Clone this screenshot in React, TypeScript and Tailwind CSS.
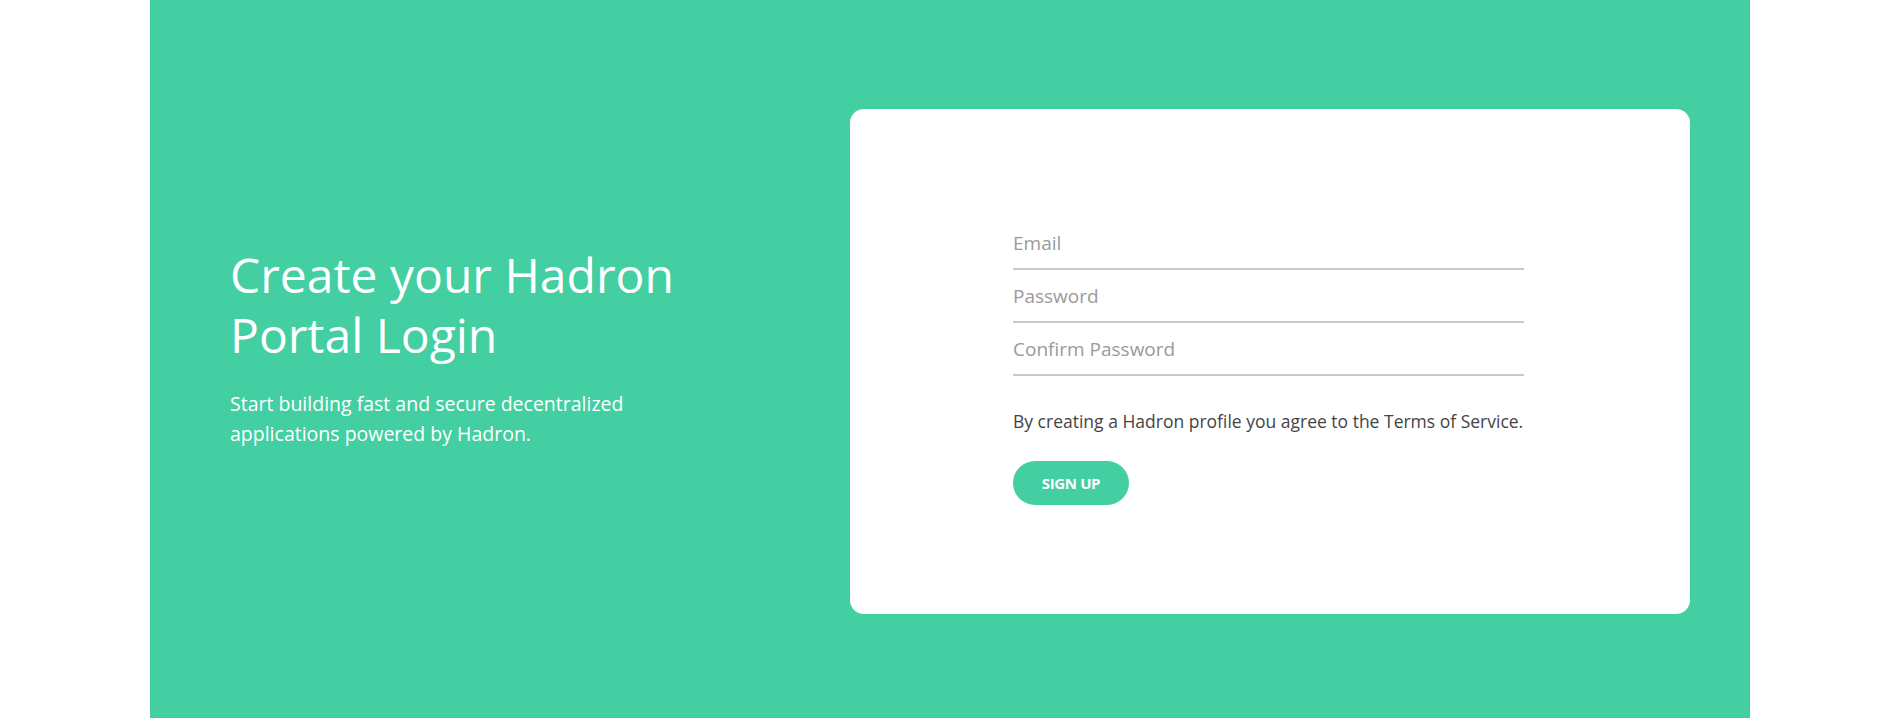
import React from "react";

export default function App() {
  return (
    <div className="min-h-[718px] w-full bg-white" style={{ fontFamily: '"Open Sans", "Noto Sans", sans-serif' }}>
      <div className="ml-[150px] w-[1600px] min-h-[718px] bg-[#43cfa1] flex">
        <div className="w-[700px] pl-[80px] pt-[245px]">
          <h1 className="text-white text-[48px] leading-[60px] font-normal">
            Create your Hadron
            <br />
            Portal Login
          </h1>
          <p className="mt-[24px] text-white text-[19.5px] leading-[30px]">
            Start building fast and secure decentralized
            <br />
            applications powered by Hadron.
          </p>
        </div>
        <div className="mt-[109px] w-[840px] h-[505px] bg-white rounded-[14px] pl-[163px] pt-[108px]">
          <div className="w-[511px] flex flex-col">
            <input
              placeholder="Email"
              className="h-[53px] w-full border-b-2 border-[#c9c9c9] outline-none text-[19px] text-[#555] placeholder:text-[#9a9a9a] bg-transparent"
            />
            <input
              type="password"
              placeholder="Password"
              className="h-[53px] w-full border-b-2 border-[#c9c9c9] outline-none text-[19px] text-[#555] placeholder:text-[#9a9a9a] bg-transparent"
            />
            <input
              type="password"
              placeholder="Confirm Password"
              className="h-[53px] w-full border-b-2 border-[#c9c9c9] outline-none text-[19px] text-[#555] placeholder:text-[#9a9a9a] bg-transparent"
            />
            <p className="mt-[33px] text-[17.5px] leading-[24px] text-[#444] whitespace-nowrap">
              By creating a Hadron profile you agree to the Terms of Service.
            </p>
            <button className="mt-[28px] w-[116px] h-[44px] rounded-full bg-[#43cfa1] text-white text-[15px] font-bold tracking-tight">
              SIGN UP
            </button>
          </div>
        </div>
      </div>
    </div>
  );
}
